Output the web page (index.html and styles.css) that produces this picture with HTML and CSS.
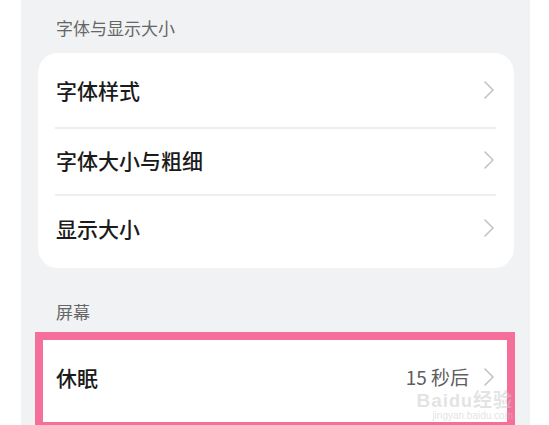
FILE: index.html
```html
<!DOCTYPE html>
<html lang="zh-CN">
<head>
<meta charset="utf-8">
<title>显示设置</title>
<link rel="stylesheet" href="styles.css">
</head>
<body>
<div class="panel">
  <div class="section-title first">字体与显示大小</div>
  <div class="card">
    <div class="row r1"><span class="label">字体样式</span><svg class="chev" viewBox="0 0 12 20"><path d="M2 2 L10 10 L2 18"/></svg></div>
    <div class="divider"></div>
    <div class="row r2"><span class="label">字体大小与粗细</span><svg class="chev" viewBox="0 0 12 20"><path d="M2 2 L10 10 L2 18"/></svg></div>
    <div class="divider"></div>
    <div class="row r3"><span class="label">显示大小</span><svg class="chev" viewBox="0 0 12 20"><path d="M2 2 L10 10 L2 18"/></svg></div>
  </div>
  <div class="section-title second">屏幕</div>
  <div class="highlight">
    <div class="row sleep">
      <span class="label">休眠</span>
      <span class="value">15 秒后</span>
      <svg class="chev" viewBox="0 0 12 20"><path d="M2 2 L10 10 L2 18"/></svg>
      <div class="watermark"><span class="wm-big">Bai<span class="wm-du">du</span>经验</span><span class="wm-small">jingyan.baidu.com</span></div>
    </div>
  </div>
</div>
</body>
</html>
```
FILE: styles.css
```css
html, body {
  margin: 0;
  padding: 0;
  background: #ffffff;
  overflow: hidden;
}
body {
  font-family: "Noto Sans CJK SC", "Noto Sans", sans-serif;
  width: 549px;
  height: 425px;
}
.panel {
  margin-left: 21px;
  width: 509px;
  height: 425px;
  background: #f1f2f4;
  padding: 0 16px 0 17px;
  box-sizing: border-box;
}
.section-title {
  font-size: 17px;
  line-height: 24px;
  color: #666666;
  padding-left: 18px;
}
.section-title.first {
  padding-top: 16px;
  margin-bottom: 13px;
}
.section-title.second {
  padding-top: 32px;
  margin-bottom: 8px;
}
.card {
  background: #ffffff;
  border-radius: 20px;
  padding: 4px 0 4px;
}
.row {
  display: flex;
  align-items: center;
  padding: 0 19px 0 18px;
  height: 66px;
}
.row.r1 { height: 70px; }
.row.r2 { height: 65px; }
.row.r3 { height: 68px; }
.label {
  font-size: 21px;
  line-height: 28px;
  font-weight: 500;
  color: #1b1b1b;
  flex: 1;
  margin-top: -4px;
}
.divider {
  height: 2px;
  background: #eeeeee;
  margin: 0 18px 0 17px;
}
.chev {
  width: 12px;
  height: 20px;
  flex: none;
  margin-top: -4px;
}
.chev path {
  fill: none;
  stroke: #c2c2c2;
  stroke-width: 1.6;
  stroke-linecap: round;
  stroke-linejoin: round;
}
.highlight {
  margin-left: -3px;
  margin-right: -1px;
  border: 8px solid #f4709a;
  background: #ffffff;
}
.row.sleep {
  position: relative;
  height: 82px;
  padding: 0 12px 0 13px;
}
.row.sleep .label {
  margin-top: -8px;
}
.value {
  font-size: 19px;
  line-height: 26px;
  color: #5e5e5e;
  margin-right: 14px;
  margin-top: -8px;
}
.row.sleep .chev {
  margin-top: -8px;
}
.watermark {
  position: absolute;
  right: -6px;
  top: 51px;
  display: flex;
  flex-direction: column;
  align-items: flex-end;
  font-family: "Liberation Sans", "Noto Sans CJK SC", sans-serif;
  color: rgba(200, 200, 200, 0.5);
  line-height: 1;
  pointer-events: none;
}
.wm-big {
  font-size: 19px;
  font-weight: bold;
  letter-spacing: 1px;
}
.wm-du {
  font-size: 18px;
}
.wm-small {
  font-size: 10px;
  margin-top: 1px;
}
```
